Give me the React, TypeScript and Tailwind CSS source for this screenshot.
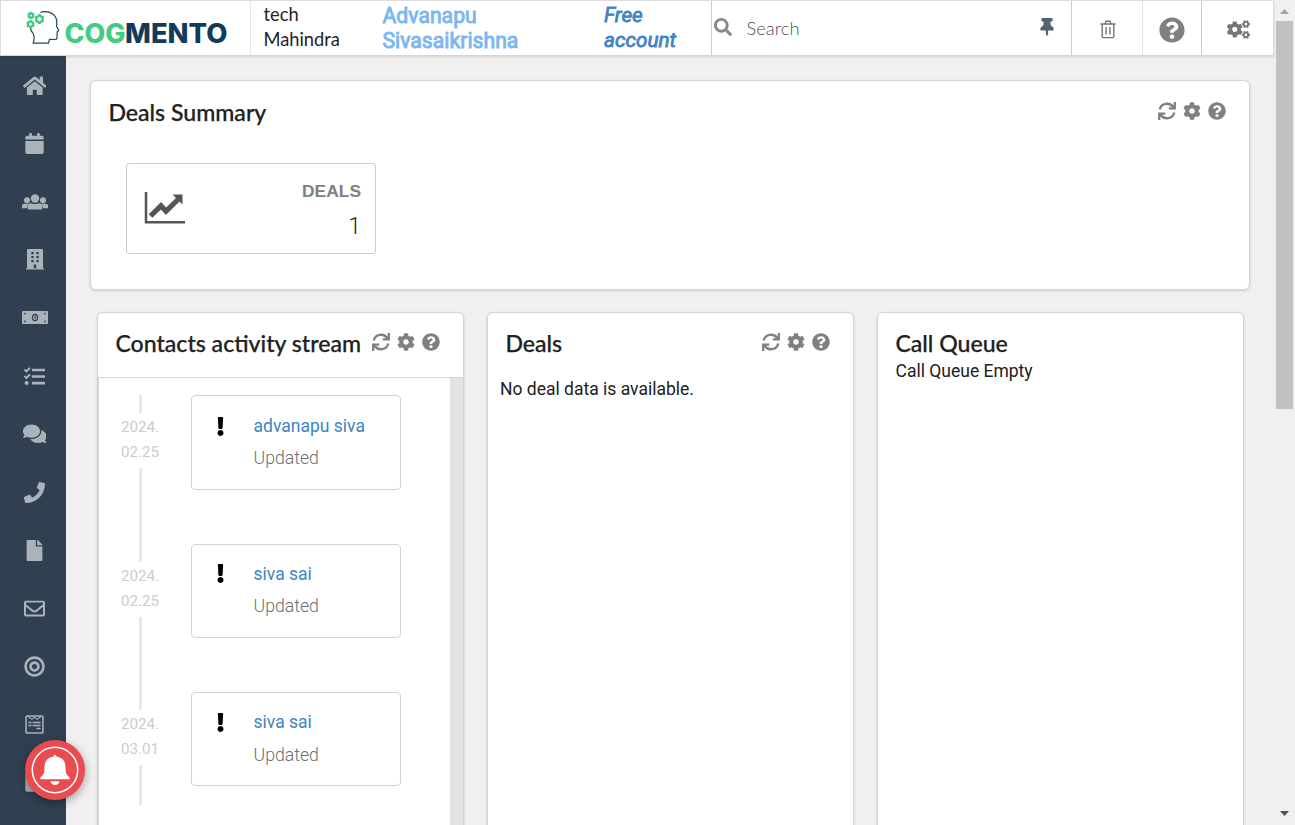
import type { ReactNode } from 'react';
import {
  FaHome, FaCalendar, FaTasks, FaComments, FaPhone, FaFile,
  FaRegEnvelope, FaBullseye, FaWpforms, FaSquare, FaCog, FaQuestionCircle, FaSearch,
  FaThumbtack, FaCogs, FaExclamation,
} from 'react-icons/fa';

function TeamIcon() {
  return (
    <svg width="26" height="16" viewBox="0 0 26 16" fill="currentColor" className="ml-px">
      <circle cx="13" cy="4.500" r="4.200" />
      <circle cx="5" cy="6.300" r="3" />
      <circle cx="21" cy="6.300" r="3" />
      <path d="M6 15.500V12.500Q6 9.200 9.300 9.200Q13 11 16.700 9.200Q20 9.200 20 12.500V15.500ZM0 14.200V11.800Q0 9.700 2.200 9.700H7Q5.300 11 5.200 14.200ZM26 14.200V11.800Q26 9.700 23.800 9.700H19Q20.700 11 20.800 14.200Z" />
    </svg>
  );
}

function BuildingIcon() {
  return (
    <svg width="18" height="21" viewBox="0 0 18 21" fill="currentColor">
      <path fillRule="evenodd" d="M1 1Q1 0 2 0H16Q17 0 17 1V19.300H18V20.500H0V19.300H1ZM5.300 3V5.200H7.600V3ZM10.400 3V5.200H12.700V3ZM5.300 7V9.200H7.600V7ZM10.400 7V9.200H12.700V7ZM5.300 11V13.200H7.600V11ZM10.400 11V13.200H12.700V11ZM7.800 15.500V19.300H10.200V15.500Z" />
    </svg>
  );
}

function MoneyIcon() {
  return (
    <svg width="26" height="13" viewBox="0 0 26 13" className="ml-px">
      <rect width="26" height="13" rx="1" fill="currentColor" />
      <g fill="#304050">
        <circle cx="3" cy="2.600" r="0.900" /><circle cx="23" cy="2.600" r="0.900" />
        <circle cx="3" cy="10.400" r="0.900" /><circle cx="23" cy="10.400" r="0.900" />
      </g>
      <ellipse cx="13" cy="6.500" rx="2.600" ry="3.200" fill="none" stroke="#304050" strokeWidth="1.200" />
      <path d="M12.300 5.300L13.200 4.800V8.200" stroke="#304050" strokeWidth="1" fill="none" />
    </svg>
  );
}

const navIcons: ReactNode[] = [
  <FaHome size={23.600} />,
  <FaCalendar size={21} />,
  <TeamIcon />,
  <BuildingIcon />,
  <MoneyIcon />,
  <FaTasks size={21} />,
  <FaComments size={23.600} />,
  <FaPhone size={21} />,
  <FaFile size={21} />,
  <FaRegEnvelope size={21} />,
  <FaBullseye size={21} />,
  <FaWpforms size={21} />,
  <FaSquare size={21} />,
];

const activity = [
  { year: '2024.', day: '02.25', name: 'advanapu siva' },
  { year: '2024.', day: '02.25', name: 'siva sai' },
  { year: '2024.', day: '03.01', name: 'siva sai' },
];

function gearPath(cx: number, cy: number, r: number) {
  const pts: string[] = [];
  for (let i = 0; i < 24; i++) {
    const a = (i / 24) * Math.PI * 2 + 0.4;
    const rad = i % 4 < 2 ? r : r * 0.74;
    pts.push(`${(cx + Math.cos(a) * rad).toFixed(2)},${(cy + Math.sin(a) * rad).toFixed(2)}`);
  }
  return `M${pts.join('L')}Z`;
}

function Logo() {
  return (
    <div className="flex items-end">
      <svg width="45" height="40" viewBox="0 0 45 40" className="block">
        <path
          d="M20.5 5.3C30 3 37 8 36.8 15.500L36.600 19.500L38.800 23.300C38.900 24.300 37.600 24.500 37.200 24.800L37 31Q36.500 32.500 35 32.500L29.500 32.300L28.500 36.200H13.200C14.800 31 14.500 28 12.500 25.500Q10.500 23.500 10.500 21"
          fill="none" stroke="#1d4363" strokeWidth="1.2" strokeLinejoin="round"
        />
        <g fill="none" stroke="#43cb83" strokeWidth="2.100">
          <path d={gearPath(11, 8.500, 2.700)} />
          <path d={gearPath(19.500, 12, 3.900)} />
          <path d={gearPath(10.500, 17.300, 3.200)} />
        </g>
      </svg>
      <svg width="166" height="40" viewBox="0 0 166 40" className="block overflow-visible">
        <g fontFamily="Inter, sans-serif" fontWeight="800" fontSize="26.500">
          <text x="-0.500" y="36.300" fill="#43cb83" textLength="61" lengthAdjust="spacingAndGlyphs">COG</text>
          <text x="60" y="36.300" fill="#123a5a" textLength="102.500" lengthAdjust="spacingAndGlyphs">MENTO</text>
        </g>
      </svg>
    </div>
  );
}

function TrashIcon() {
  return (
    <svg width="16" height="19" viewBox="0 0 16 19" fill="none" stroke="#767676" strokeWidth="1.400">
      <path d="M0.500 4H15.500M5 4L6 1.300H10L11 4M2.200 4V16.500Q2.200 17.600 3.300 17.600H12.700Q13.800 17.600 13.800 16.500V4M6.100 7V14.500M9.900 7V14.500" />
    </svg>
  );
}

function Header() {
  return (
    <header className="relative z-10 flex h-14 w-[1274px] shrink-0 border border-[#dcdcdc] border-b-[#d6d6d6] bg-white shadow-[0_1px_2px_rgba(34,36,38,0.15)]">
      <div className="w-[250px] shrink-0 border-r border-[#e8e8e8] pl-[19px] pt-[6px]">
        <Logo />
      </div>
      <div className="w-[119px] shrink-0 pl-[12.500px] pt-px font-['Lato',sans-serif] text-[18.300px] leading-[25px] text-[#222]">
        tech<br />Mahindra
      </div>
      <div className="w-[221px] shrink-0 pl-[12.500px] pt-[2px] font-['Roboto',sans-serif] text-[21.200px] leading-[25px] text-[#7db7ef] [-webkit-text-stroke:0.9px_#7db7ef]">
        Advanapu<br />Sivasaikrishna
      </div>
      <div className="w-[121px] shrink-0 border-r border-[#ccc] pl-[13px] pt-[2px] font-['Roboto',sans-serif] text-[20.700px] italic leading-[25px] text-[#4183c4] [-webkit-text-stroke:0.8px_#4183c4]">
        Free<br />account
      </div>
      <div className="flex grow items-start pl-[2px] pt-[17px] text-[#888]">
        <FaSearch size={18} />
        <span className="ml-[14.500px] mt-[-4px] grow font-['Lato',sans-serif] text-[18.400px] font-light leading-[28px] text-[#505050]">Search</span>
        <FaThumbtack size={18} className="mr-[15px] text-[#56616e]" />
      </div>
      <div className="flex w-[72px] justify-center border-x border-[#ccc] border-r-[#e4e4e4] pl-px pt-[18.500px]"><TrashIcon /></div>
      <div className="flex w-[59px] justify-center border-r border-[#ccc] pt-4 text-[#808080]"><FaQuestionCircle size={26} /></div>
      <div className="flex w-[71px] items-start justify-center pl-[2px] pt-[16.500px] text-[#767676]"><FaCogs size={23} /></div>
    </header>
  );
}

function RefreshIcon() {
  return (
    <svg width="18" height="18" viewBox="0 0 18 18" fill="none" stroke="currentColor" strokeWidth="2.300">
      <path d="M1.700 7.500A7.500 7.500 0 0 1 15.300 5.200M16.800 0V6.400H10.800M16.300 10.500A7.500 7.500 0 0 1 2.700 12.800M1.200 18V11.600H7.200" />
    </svg>
  );
}

function Tools() {
  return (
    <div className="flex items-center gap-[7px] text-[#808080]">
      <RefreshIcon /><FaCog size={18} /><FaQuestionCircle size={18} />
    </div>
  );
}

function Card({ title, tools = true, className, children }: { title: string; tools?: boolean; className: string; children: ReactNode }) {
  return (
    <section className={`flex flex-col rounded-[6px] border border-[#d4d4d5] bg-white shadow-[0_1px_3px_rgba(0,0,0,0.14)] ${className}`}>
      <div className="flex items-start justify-between pl-[17.400px] pr-[23px]">
        <h2 className="whitespace-nowrap font-['Lato',sans-serif] text-[23.100px] font-medium leading-[32px] text-[#212121] [-webkit-text-stroke:0.25px_#212121]">{title}</h2>
        {tools && <div className="pt-[6px]"><Tools /></div>}
      </div>
      {children}
    </section>
  );
}

function ActivityStream() {
  return (
    <div className="mt-[18px] flex grow border-l border-t border-[#d6d6d6]">
      <div className="grow pl-[13px] pt-[17px]">
        {activity.map((item, i) => (
          <div key={i} className="flex h-[148.500px]">
            <div className="flex w-[56px] flex-col items-center font-['Roboto',sans-serif] text-[15.200px] font-normal leading-[25px] text-[#ccc]">
              <div className="h-[18px] w-[3px] bg-[#e8e8e8]" />
              <div className="flex h-[55px] flex-col pt-[2px]">
                <span>{item.year}</span><span>{item.day}</span>
              </div>
              <div className={i === 2 ? 'h-[40px] w-[3px] shrink-0 bg-[#e8e8e8]' : 'w-[3px] grow bg-[#e8e8e8]'} />
            </div>
            <div className={`ml-[23px] flex w-[210px] rounded-[4px] border border-[#d4d4d4] pl-[18.500px] font-['Roboto',sans-serif] ${i === 0 ? 'h-[95px] pt-[15px]' : 'h-[94px] pt-[14.300px]'}`}>
              <FaExclamation size={19} className="mt-[5.500px] text-black" />
              <div className="ml-6 whitespace-nowrap text-[17.500px]">
                <div className="leading-[30px] text-[#4183c4]">{item.name}</div>
                <div className="mt-[2.400px] text-[17.700px] font-light leading-[30px] text-[#707070]">Updated</div>
              </div>
            </div>
          </div>
        ))}
      </div>
      <div className="w-[13px] shrink-0 bg-[#e3e3e3]" />
    </div>
  );
}

function DealsTile() {
  return (
    <div className="ml-[35px] mt-[35px] flex h-[91px] w-[250px] justify-between rounded-[3px] border border-[#ccc] pl-[17px] pr-[14px]">
      <svg width="42" height="34" viewBox="0 0 42 34" className="mt-[27px]" fill="none" stroke="#555">
        <path d="M2 1V31.200H41" strokeWidth="2.500" />
        <path d="M6.500 25L17 14.800L22 20.300L34 8.500" strokeWidth="5.200" />
        <path d="M28.500 3.500H38.500V13.500Z" fill="#555" stroke="none" />
      </svg>
      <div className="pt-4 text-right">
        <div className="font-['Liberation_Sans',sans-serif] text-[17.400px] font-bold leading-[23.500px] text-[#808080]">DEALS</div>
        <div className="mt-[7.500px] font-['Roboto',sans-serif] text-[23px] font-light leading-8 text-[#222]">1</div>
      </div>
    </div>
  );
}

function Sidebar() {
  return (
    <nav className="flex w-[66px] shrink-0 flex-col overflow-hidden bg-[#304050] pl-[3px] pt-[0.500px] text-[#abb3ba]">
      {navIcons.map((icon, i) => (
        <div key={i} className="flex h-[58.100px] shrink-0 items-center justify-center">{icon}</div>
      ))}
    </nav>
  );
}

export default function App() {
  return (
    <div className="relative flex h-[825px] w-[1295px] overflow-hidden bg-[#f0f0f0]">
      <div className="flex w-[1274px] shrink-0 flex-col">
        <Header />
        <div className="flex min-h-0 grow">
          <Sidebar />
          <main className="flex min-w-0 grow flex-col pl-6 pt-6">
            <Card title="Deals Summary" className="h-[210px] w-[1160px] shrink-0 pt-[15px]"><DealsTile /></Card>
            <div className="ml-[7px] mt-[22px] flex gap-[23px]">
              <Card title="Contacts activity stream" className="h-[530px] w-[367px] pt-[14px]"><ActivityStream /></Card>
              <Card title="Deals" className="h-[530px] w-[367px] pt-[14px]">
                <p className="pl-3 pt-[14px] font-['Roboto',sans-serif] text-[17.500px] leading-8 text-[#212121]">No deal data is available.</p>
              </Card>
              <Card title="Call Queue" tools={false} className="h-[530px] w-[367px] pt-[14px]">
                <p className="pl-[17.500px] pt-px font-['Roboto',sans-serif] text-[17.500px] leading-[22px] text-[#212121]">Call Queue Empty</p>
              </Card>
            </div>
          </main>
        </div>
      </div>
      <div className="flex w-[21px] flex-col items-center justify-between">
        <div className="flex flex-col items-center">
          <svg width="17" height="21" viewBox="0 0 17 21"><path d="M4 14L8.500 9L13 14Z" fill="#a3a3a3" /></svg>
          <div className="h-[388px] w-[17px] bg-[#c1c1c1]" />
        </div>
        <svg width="17" height="17" viewBox="0 0 17 17"><path d="M4 3H13L8.500 8Z" fill="#505050" /></svg>
      </div>
      <div className="absolute left-[25px] top-[740px] z-20 h-[60px] w-[60px] rounded-full bg-[#e84c50] shadow-[0_3px_10px_rgba(0,0,0,0.35)]">
        <svg width="60" height="60" viewBox="0 0 60 60">
          <circle cx="30" cy="30" r="22.700" fill="none" stroke="white" strokeWidth="1.500" />
          <path d="M28.200 16.800Q30 12.800 31.800 16.800C37.500 17.500 40.500 21.500 40.500 27C40.500 33 41.500 35.500 44.700 37.300V39.300H15.300V37.300C18.500 35.500 19.500 33 19.500 27C19.500 21.500 22.500 17.500 28.200 16.800ZM25.500 41.200H34.500Q33.500 45 30 45Q26.500 45 25.500 41.200Z" fill="white" />
        </svg>
      </div>
    </div>
  );
}
